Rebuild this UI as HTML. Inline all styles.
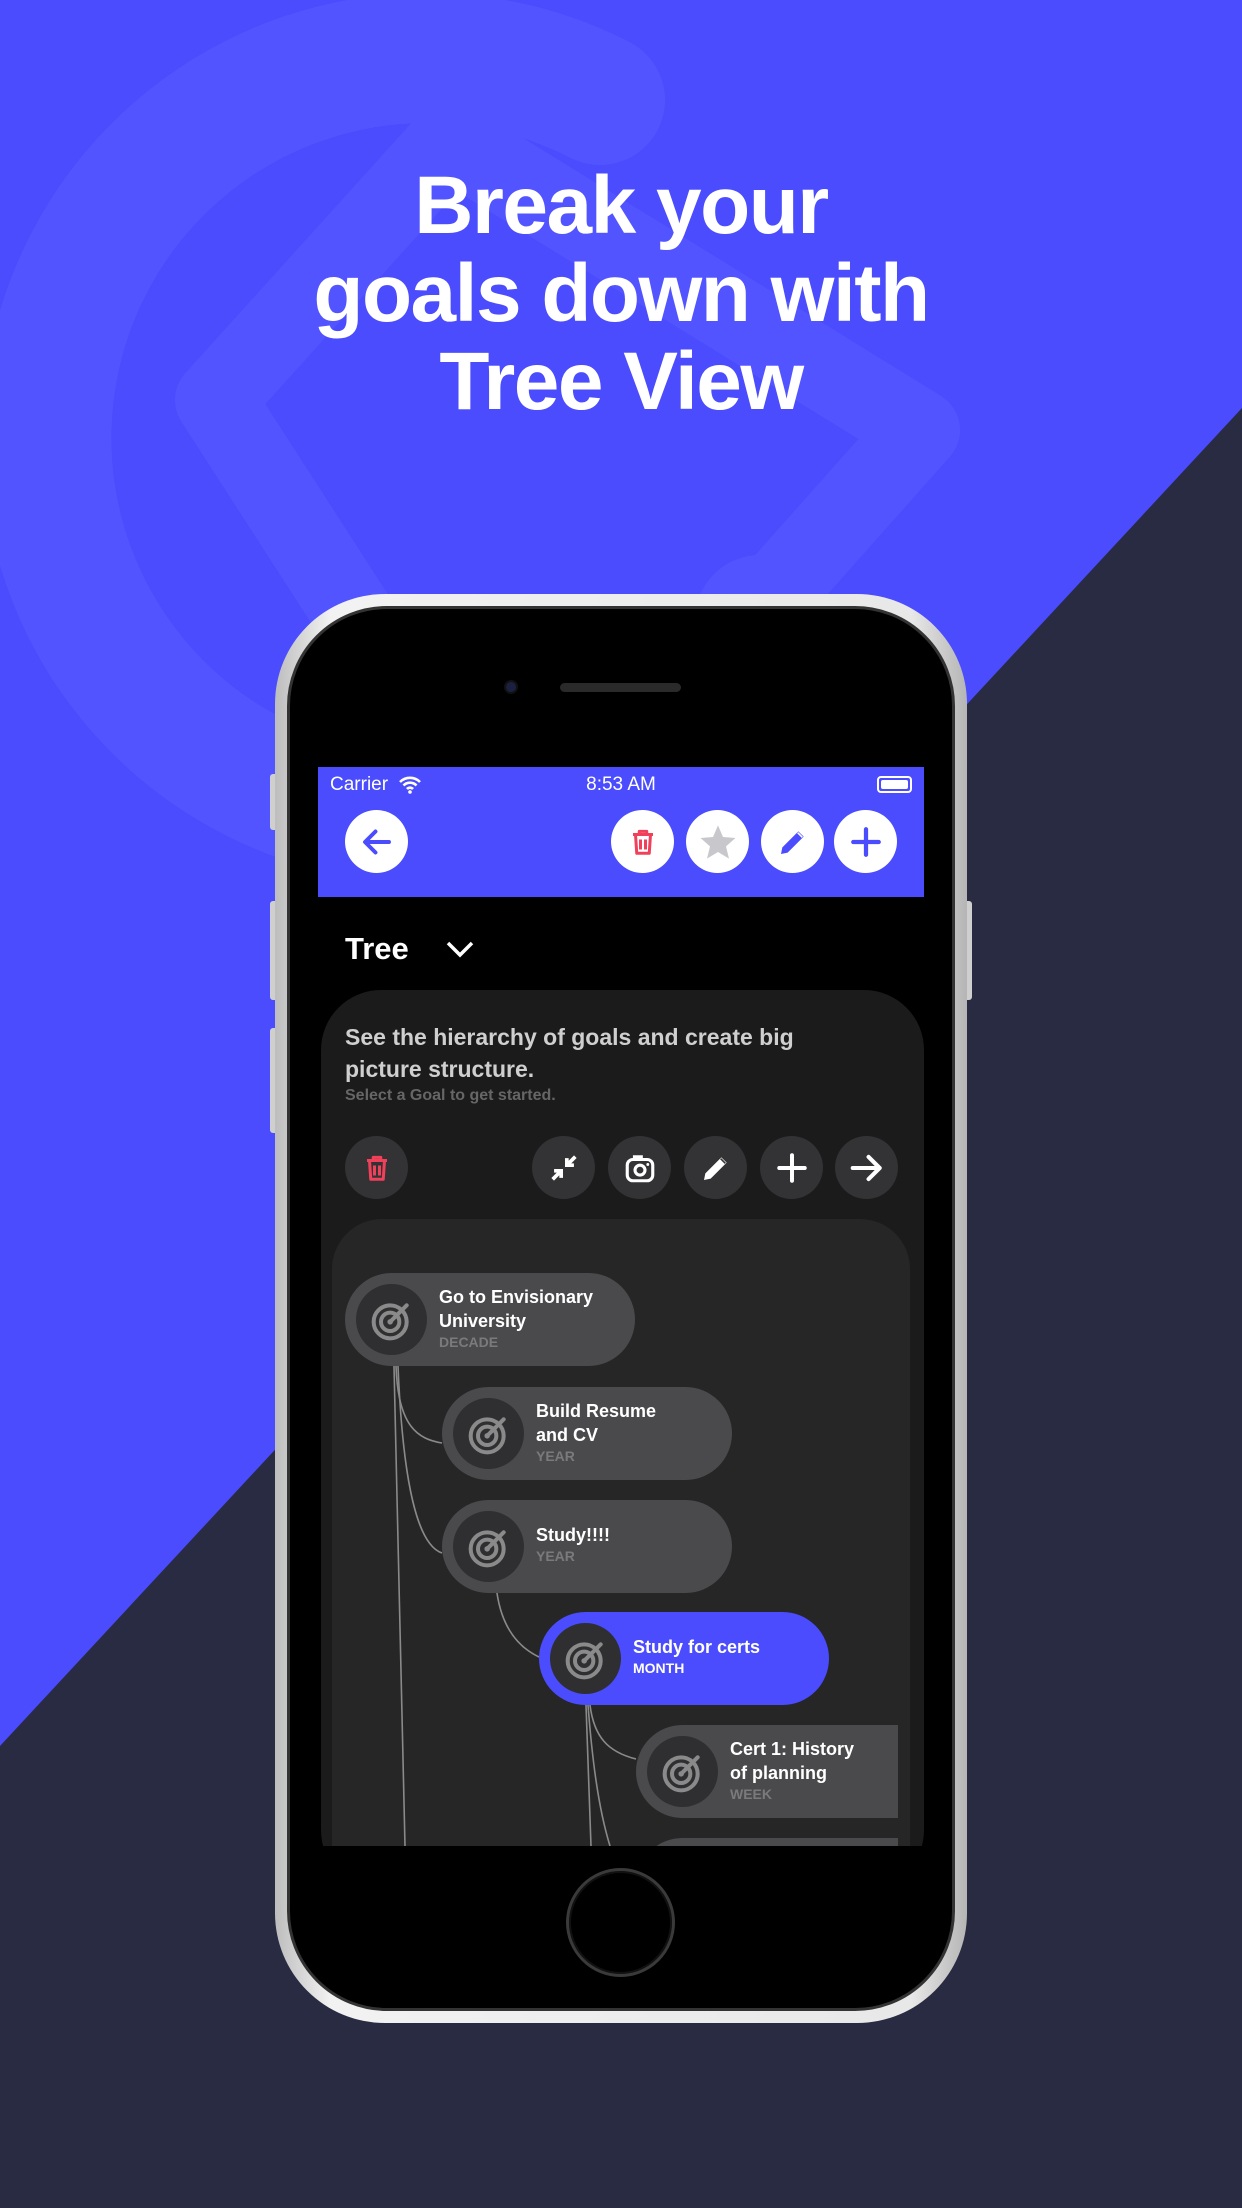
<!DOCTYPE html>
<html><head><meta charset="utf-8"><style>
*{margin:0;padding:0;box-sizing:border-box}
body{width:1242px;height:2208px;overflow:hidden;background:#4a4cfe;font-family:"Liberation Sans",sans-serif;position:relative}
.abs{position:absolute}
h1{position:absolute;left:0;width:1242px;top:162px;text-align:center;color:#fff;font-size:82px;line-height:88px;font-weight:bold;letter-spacing:-1.5px}
.btn{position:absolute;width:63px;height:63px;border-radius:50%;display:flex;align-items:center;justify-content:center}
.w{background:#fff}
.g{background:#333335}
.pill{position:absolute;height:93px;border-radius:47px;background:#4a4a4c}
.pill .c{position:absolute;left:11px;top:11px;width:71px;height:71px;border-radius:50%;background:#2f2f31;display:flex;align-items:center;justify-content:center}
.pill .t{position:absolute;left:94px;color:#fff;font-weight:bold;font-size:18px;line-height:24px}
.pill .k{color:#7a7a7c;font-size:14px;line-height:18px}
</style></head><body>
<svg class="abs" style="left:0;top:0" width="1242" height="2208">
<polygon points="1242,408 1242,2208 0,2208 0,1746" fill="#292b42"/>
<g fill="none" stroke="#5255ff" stroke-linecap="round" stroke-linejoin="round">
<path d="M600 100 A380 380 0 1 0 760 620" stroke-width="130"/>
<polygon points="215,400 450,140 920,430 600,790 460,780" stroke-width="80"/>
</g>
</svg>
<h1>Break your<br>goals down with<br>Tree View</h1>
<!-- phone -->
<div class="abs" style="left:270px;top:774px;width:8px;height:56px;background:#cfcfcf;border-radius:3px"></div>
<div class="abs" style="left:270px;top:901px;width:8px;height:99px;background:#cfcfcf;border-radius:3px"></div>
<div class="abs" style="left:270px;top:1028px;width:8px;height:105px;background:#cfcfcf;border-radius:3px"></div>
<div class="abs" style="left:964px;top:901px;width:8px;height:99px;background:#cfcfcf;border-radius:3px"></div>
<div class="abs" style="left:275px;top:594px;width:692px;height:1429px;border-radius:110px;background:linear-gradient(90deg,#bdbdbd,#f2f2f2 8%,#e8e8e8 92%,#b5b5b5)"></div>
<div class="abs" style="left:287px;top:606px;width:668px;height:1405px;border-radius:100px;background:#000;border:3px solid #333"></div>
<div class="abs" style="left:504px;top:680px;width:14px;height:14px;border-radius:50%;background:#1b2040;border:2px solid #111"></div>
<div class="abs" style="left:560px;top:683px;width:121px;height:9px;border-radius:5px;background:#2a2a2a"></div>
<div class="abs" style="left:566px;top:1868px;width:109px;height:109px;border-radius:50%;background:#000;border:3px solid #3a3a3a;box-shadow:inset 0 0 0 2px #111"></div>
<!-- screen -->
<div class="abs" style="left:318px;top:767px;width:606px;height:1079px;background:#000;overflow:hidden">
 <div class="abs" style="left:0;top:0;width:606px;height:130px;background:#4a4cfe"></div>
 <div class="abs" style="left:12px;top:7px;color:#fff;font-size:19px">Carrier</div>
 <svg class="abs" style="left:80px;top:9px" width="24" height="18" viewBox="0 0 24 18"><path d="M2 6a14 14 0 0 1 20 0M5.5 9.5a9 9 0 0 1 13 0M9 13a4 4 0 0 1 6 0" stroke="#fff" stroke-width="2.6" fill="none"/><circle cx="12" cy="16" r="1.8" fill="#fff"/></svg>
 <div class="abs" style="left:0;width:606px;top:7px;text-align:center;color:#fff;font-size:19px">8:53 AM</div>
 <div class="abs" style="left:559px;top:9px;width:35px;height:17px;border:2px solid #fff;border-radius:4px;padding:2px"><div style="background:#fff;width:100%;height:100%;border-radius:2px"></div></div>
 <div class="btn w" style="left:27px;top:43px"><svg width="36" height="36" viewBox="0 0 24 24"><path d="M20 12H5M11 5l-7 7 7 7" stroke="#4a4cfe" stroke-width="2.6" fill="none" stroke-linecap="round" stroke-linejoin="round"/></svg></div>
 <div class="btn w" style="left:293px;top:43px"><svg width="30" height="30" viewBox="0 0 24 24"><path d="M4 6h16M9 6V3.5h6V6M6 6l1 15h10l1-15M10 10v8M14 10v8" stroke="#f0405a" stroke-width="2.4" fill="none" stroke-linejoin="round"/></svg></div>
 <div class="btn w" style="left:368px;top:43px"><svg width="40" height="40" viewBox="0 0 24 24"><path d="M12 2l3 7 7.5.6-5.7 5 1.8 7.4L12 18l-6.6 4 1.8-7.4-5.7-5L9 9z" fill="#c8c8cc"/></svg></div>
 <div class="btn w" style="left:443px;top:43px"><svg width="32" height="32" viewBox="0 0 24 24"><path d="M3 21l1-5L16 4l4 4L8 20zM14 6l4 4" fill="#4a4cfe"/><path d="M15.5 5l3.5 3.5" stroke="#fff" stroke-width="1.2"/></svg></div>
 <div class="btn w" style="left:516px;top:43px"><svg width="34" height="34" viewBox="0 0 24 24"><path d="M12 3v18M3 12h18" stroke="#4a4cfe" stroke-width="3" stroke-linecap="round"/></svg></div>
 <div class="abs" style="left:27px;top:164px;color:#fff;font-weight:bold;font-size:31px">Tree</div>
 <svg class="abs" style="left:127px;top:170px" width="30" height="24" viewBox="0 0 30 24"><path d="M3 6l12 12 12-12" stroke="#fff" stroke-width="3.5" fill="none"/></svg>
 <!-- card -->
 <div class="abs" style="left:3px;top:223px;width:603px;height:900px;border-radius:60px;background:#1b1b1c"></div>
 <div class="abs" style="left:27px;top:254px;width:500px;color:#cfcfcf;font-weight:bold;font-size:23px;line-height:32px">See the hierarchy of goals and create big picture structure.</div>
 <div class="abs" style="left:27px;top:320px;color:#666;font-weight:bold;font-size:16px">Select a Goal to get started.</div>
 <div class="btn g" style="left:27px;top:369px"><svg width="30" height="30" viewBox="0 0 24 24"><path d="M4 6h16M9 6V3.5h6V6M6 6l1 15h10l1-15M10 10v8M14 10v8" stroke="#f0405a" stroke-width="2.4" fill="none" stroke-linejoin="round"/></svg></div>
 <div class="btn g" style="left:214px;top:369px"><svg width="34" height="34" viewBox="0 0 24 24"><path d="M4 20l6-6M5 14h5v5M20 4l-6 6M14 5v5h5" stroke="#fff" stroke-width="2.6" fill="none"/></svg></div>
 <div class="btn g" style="left:290px;top:369px"><svg width="34" height="34" viewBox="0 0 24 24"><rect x="3" y="6" width="18" height="15" rx="4" stroke="#fff" stroke-width="2.2" fill="none"/><circle cx="12" cy="13.5" r="3.5" stroke="#fff" stroke-width="2.2" fill="none"/><path d="M8 6V4h5v2" stroke="#fff" stroke-width="2" fill="none"/><circle cx="17.5" cy="9.5" r="1" fill="#fff"/></svg></div>
 <div class="btn g" style="left:366px;top:369px"><svg width="32" height="32" viewBox="0 0 24 24"><path d="M3 21l1-5L16 4l4 4L8 20z" fill="#fff"/><path d="M15.5 5l3.5 3.5" stroke="#333" stroke-width="1.2"/></svg></div>
 <div class="btn g" style="left:442px;top:369px"><svg width="34" height="34" viewBox="0 0 24 24"><path d="M12 3v18M3 12h18" stroke="#fff" stroke-width="2.8" stroke-linecap="round"/></svg></div>
 <div class="btn g" style="left:517px;top:369px"><svg width="38" height="38" viewBox="0 0 24 24"><path d="M3 12h17M13 5l7 7-7 7" stroke="#fff" stroke-width="2.6" fill="none" stroke-linecap="round" stroke-linejoin="round"/></svg></div>
 <!-- tree card -->
 <div class="abs" style="left:14px;top:452px;width:578px;height:700px;border-radius:50px;background:#262627"></div>
 <svg class="abs" style="left:0;top:0" width="606" height="1079">
 <g stroke="#8a8a8a" stroke-width="1.6" fill="none">
 <path d="M76 599 L87 1079"/>
 <path d="M78 599 C80 660 100 672 124 676"/>
 <path d="M80 599 C85 720 100 778 124 786"/>
 <path d="M178 818 C182 860 200 880 221 890"/>
 <path d="M268 938 L273 1079"/>
 <path d="M272 938 C276 970 290 985 318 992"/>
 <path d="M270 938 C274 990 280 1040 292 1079"/>
 </g>
 </svg>
 <div class="pill" style="left:27px;top:506px;width:290px"><div class="c">T</div><div class="t" style="top:12px">Go to Envisionary<br>University<div class="k">DECADE</div></div></div>
 <div class="pill" style="left:124px;top:620px;width:290px"><div class="c">T</div><div class="t" style="top:12px">Build Resume<br>and CV<div class="k">YEAR</div></div></div>
 <div class="pill" style="left:124px;top:733px;width:290px"><div class="c">T</div><div class="t" style="top:23px">Study!!!!<div class="k">YEAR</div></div></div>
 <div class="pill" style="left:221px;top:845px;width:290px;background:#4a4cfe"><div class="c">T</div><div class="t" style="top:23px">Study for certs<div class="k" style="color:#fff">MONTH</div></div></div>
 <div class="pill" style="left:318px;top:958px;width:262px;border-radius:47px 0 0 47px"><div class="c">T</div><div class="t" style="top:12px">Cert 1: History<br>of planning<div class="k">WEEK</div></div></div>
 <div class="pill" style="left:318px;top:1071px;width:262px;border-radius:47px 0 0 47px"></div>
</div>
<script>
document.querySelectorAll('.pill .c').forEach(function(c){c.innerHTML='<svg width="44" height="44" viewBox="0 0 24 24"><circle cx="11" cy="13" r="9" stroke="#8a8a8a" stroke-width="2.2" fill="none"/><circle cx="11" cy="13" r="5" stroke="#8a8a8a" stroke-width="2.2" fill="none"/><circle cx="11" cy="13" r="1.5" fill="#8a8a8a"/><path d="M11 13L20 4" stroke="#8a8a8a" stroke-width="2.2" stroke-linecap="round"/></svg>';});
</script>
</body></html>
